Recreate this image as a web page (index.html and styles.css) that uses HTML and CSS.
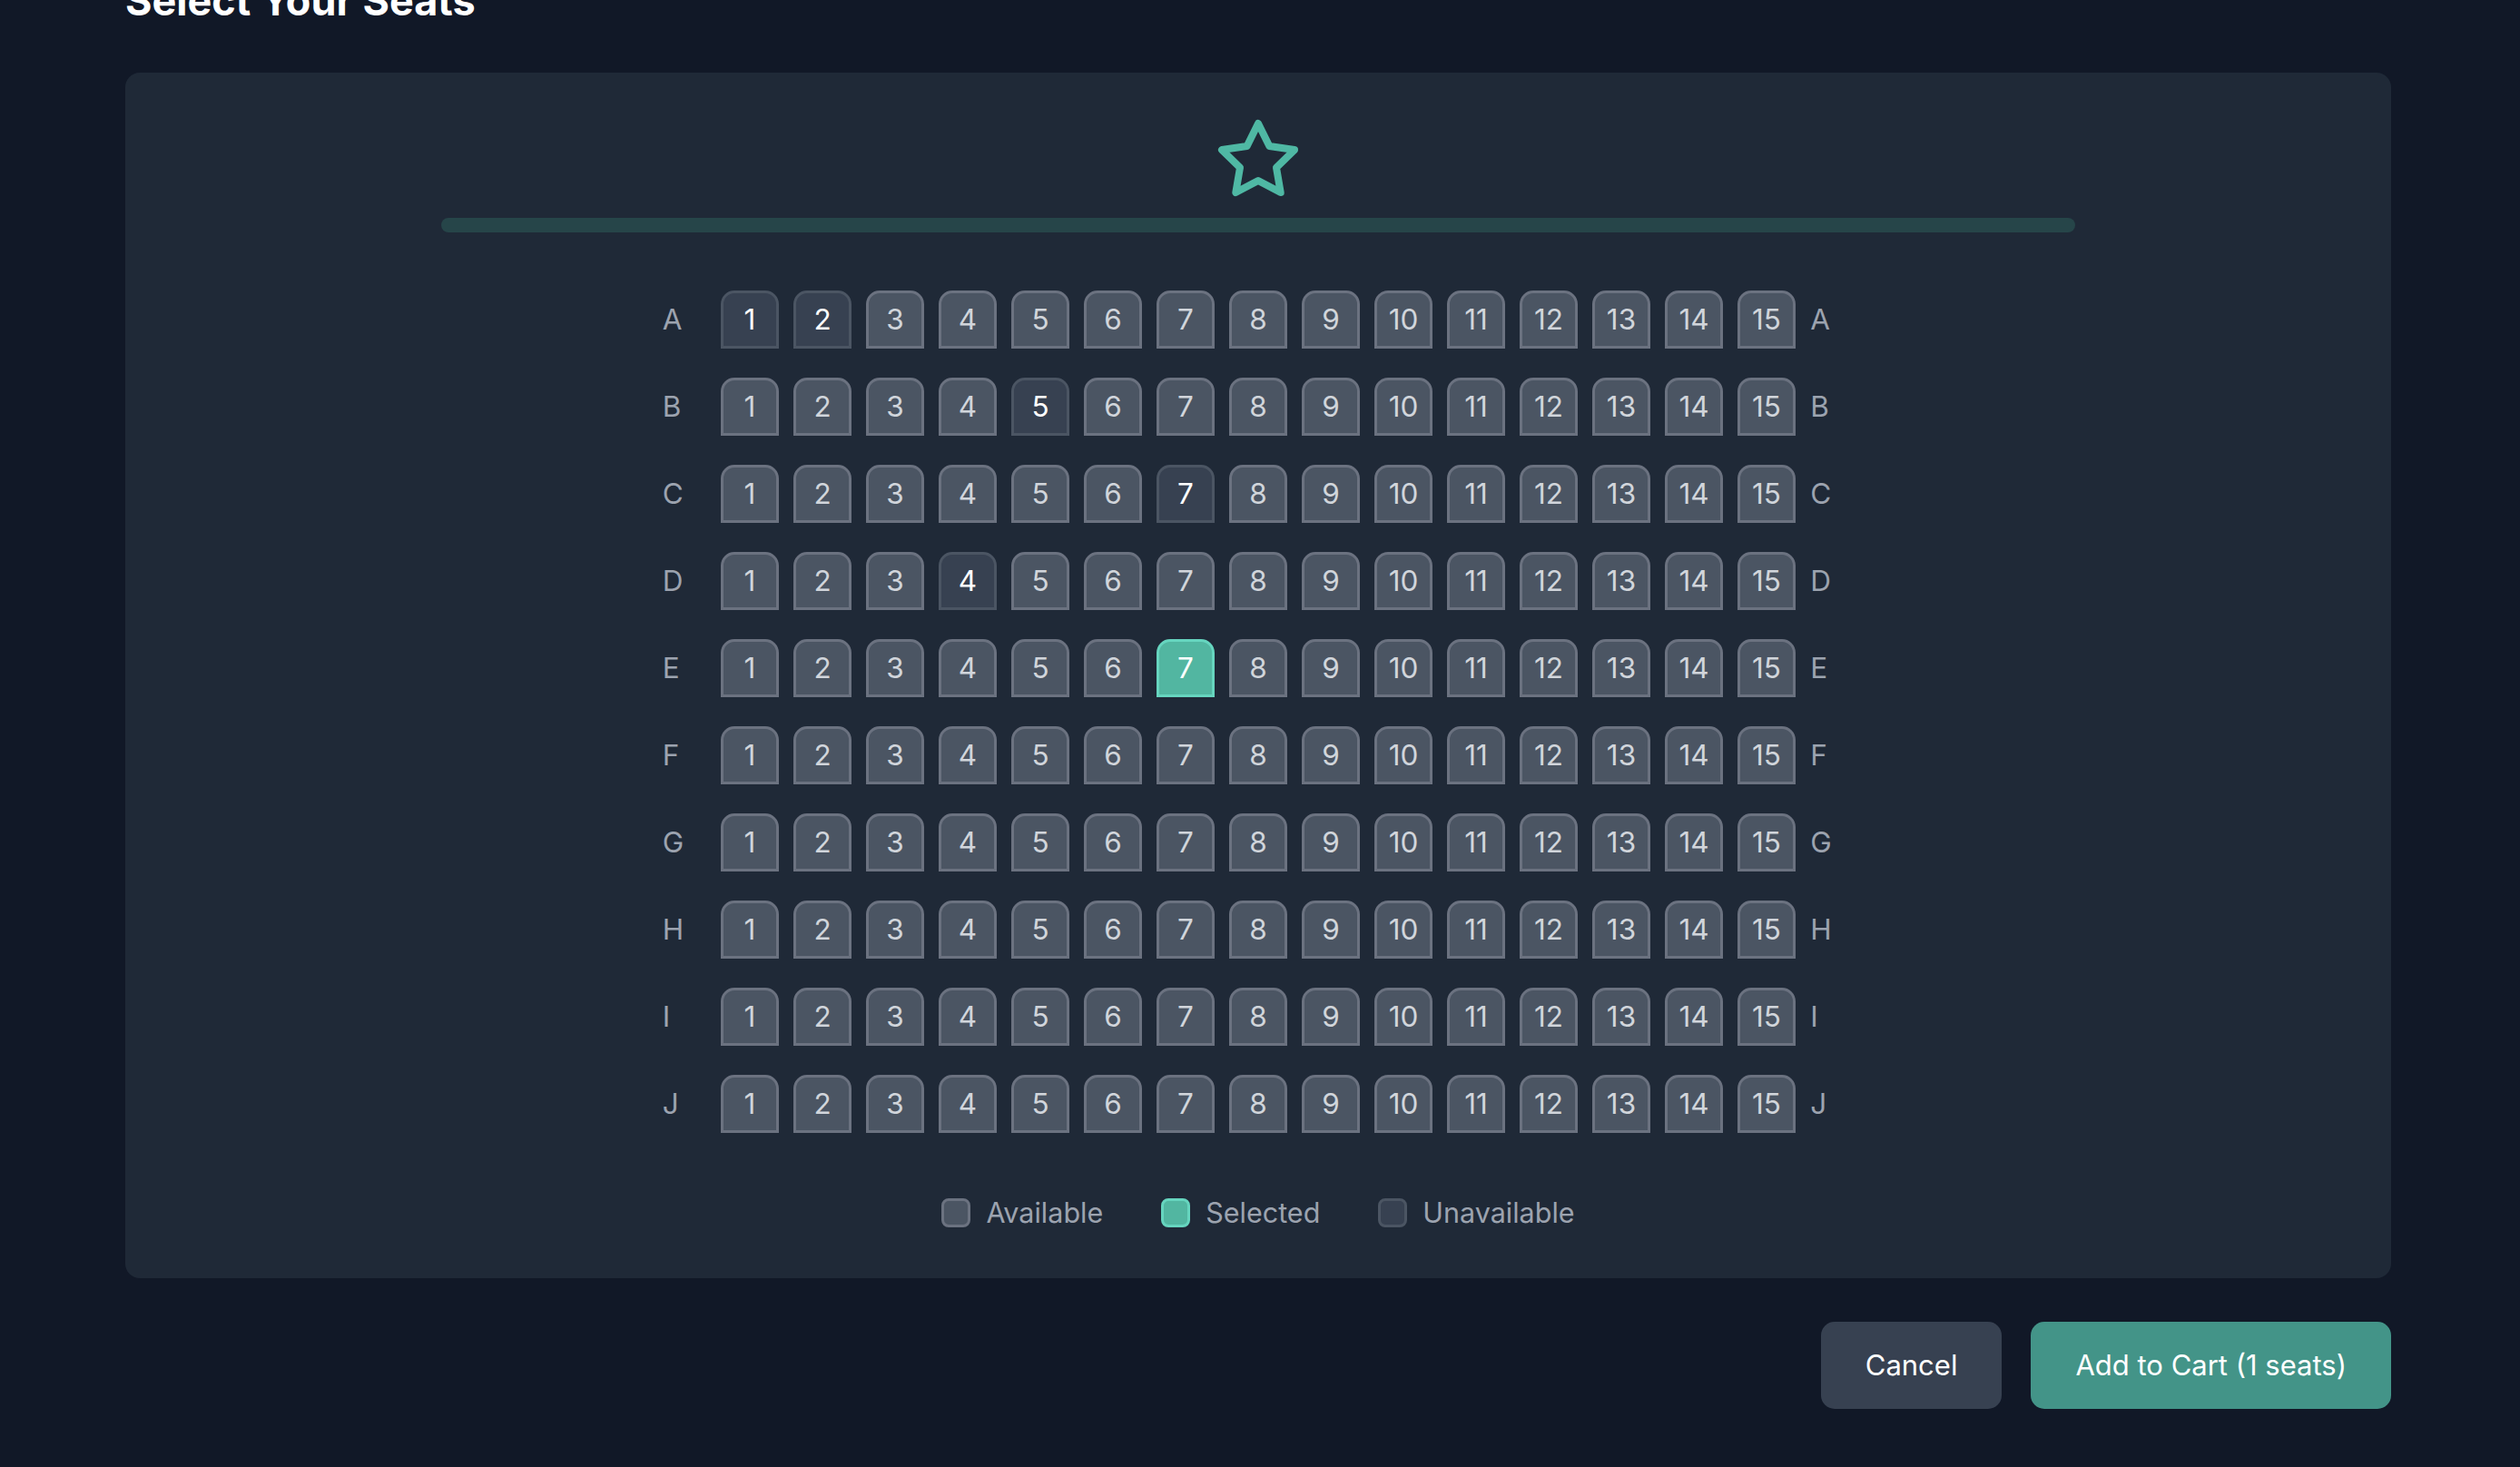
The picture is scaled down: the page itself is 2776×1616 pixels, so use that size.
FILE: index.html
```html
<!DOCTYPE html>
<html lang="en">
<head>
<meta charset="utf-8">
<title>Select Your Seats</title>
<link rel="stylesheet" href="styles.css">
</head>
<body>
<main class="page">
  <h1 class="title">Select Your Seats</h1>
  <section class="card">
    <div class="screen">
      <svg class="star" width="96" height="96" viewBox="0 0 24 24" fill="none" stroke="currentColor" stroke-width="2" stroke-linecap="round" stroke-linejoin="round"><polygon points="12 2 15.09 8.26 22 9.27 17 14.14 18.18 21.02 12 17.77 5.82 21.02 7 14.14 2 9.27 8.91 8.26 12 2"/></svg>
      <div class="screen-bar"></div>
    </div>
    <div class="rows">
      <div class="row"><span class="label">A</span><span class="seat off">1</span><span class="seat off">2</span><span class="seat">3</span><span class="seat">4</span><span class="seat">5</span><span class="seat">6</span><span class="seat">7</span><span class="seat">8</span><span class="seat">9</span><span class="seat">10</span><span class="seat">11</span><span class="seat">12</span><span class="seat">13</span><span class="seat">14</span><span class="seat">15</span><span class="label">A</span></div>
      <div class="row"><span class="label">B</span><span class="seat">1</span><span class="seat">2</span><span class="seat">3</span><span class="seat">4</span><span class="seat off">5</span><span class="seat">6</span><span class="seat">7</span><span class="seat">8</span><span class="seat">9</span><span class="seat">10</span><span class="seat">11</span><span class="seat">12</span><span class="seat">13</span><span class="seat">14</span><span class="seat">15</span><span class="label">B</span></div>
      <div class="row"><span class="label">C</span><span class="seat">1</span><span class="seat">2</span><span class="seat">3</span><span class="seat">4</span><span class="seat">5</span><span class="seat">6</span><span class="seat off">7</span><span class="seat">8</span><span class="seat">9</span><span class="seat">10</span><span class="seat">11</span><span class="seat">12</span><span class="seat">13</span><span class="seat">14</span><span class="seat">15</span><span class="label">C</span></div>
      <div class="row"><span class="label">D</span><span class="seat">1</span><span class="seat">2</span><span class="seat">3</span><span class="seat off">4</span><span class="seat">5</span><span class="seat">6</span><span class="seat">7</span><span class="seat">8</span><span class="seat">9</span><span class="seat">10</span><span class="seat">11</span><span class="seat">12</span><span class="seat">13</span><span class="seat">14</span><span class="seat">15</span><span class="label">D</span></div>
      <div class="row"><span class="label">E</span><span class="seat">1</span><span class="seat">2</span><span class="seat">3</span><span class="seat">4</span><span class="seat">5</span><span class="seat">6</span><span class="seat picked">7</span><span class="seat">8</span><span class="seat">9</span><span class="seat">10</span><span class="seat">11</span><span class="seat">12</span><span class="seat">13</span><span class="seat">14</span><span class="seat">15</span><span class="label">E</span></div>
      <div class="row"><span class="label">F</span><span class="seat">1</span><span class="seat">2</span><span class="seat">3</span><span class="seat">4</span><span class="seat">5</span><span class="seat">6</span><span class="seat">7</span><span class="seat">8</span><span class="seat">9</span><span class="seat">10</span><span class="seat">11</span><span class="seat">12</span><span class="seat">13</span><span class="seat">14</span><span class="seat">15</span><span class="label">F</span></div>
      <div class="row"><span class="label">G</span><span class="seat">1</span><span class="seat">2</span><span class="seat">3</span><span class="seat">4</span><span class="seat">5</span><span class="seat">6</span><span class="seat">7</span><span class="seat">8</span><span class="seat">9</span><span class="seat">10</span><span class="seat">11</span><span class="seat">12</span><span class="seat">13</span><span class="seat">14</span><span class="seat">15</span><span class="label">G</span></div>
      <div class="row"><span class="label">H</span><span class="seat">1</span><span class="seat">2</span><span class="seat">3</span><span class="seat">4</span><span class="seat">5</span><span class="seat">6</span><span class="seat">7</span><span class="seat">8</span><span class="seat">9</span><span class="seat">10</span><span class="seat">11</span><span class="seat">12</span><span class="seat">13</span><span class="seat">14</span><span class="seat">15</span><span class="label">H</span></div>
      <div class="row"><span class="label">I</span><span class="seat">1</span><span class="seat">2</span><span class="seat">3</span><span class="seat">4</span><span class="seat">5</span><span class="seat">6</span><span class="seat">7</span><span class="seat">8</span><span class="seat">9</span><span class="seat">10</span><span class="seat">11</span><span class="seat">12</span><span class="seat">13</span><span class="seat">14</span><span class="seat">15</span><span class="label">I</span></div>
      <div class="row"><span class="label">J</span><span class="seat">1</span><span class="seat">2</span><span class="seat">3</span><span class="seat">4</span><span class="seat">5</span><span class="seat">6</span><span class="seat">7</span><span class="seat">8</span><span class="seat">9</span><span class="seat">10</span><span class="seat">11</span><span class="seat">12</span><span class="seat">13</span><span class="seat">14</span><span class="seat">15</span><span class="label">J</span></div>
    </div>
    <div class="legend">
      <div class="legend-item"><span class="swatch"></span><span>Available</span></div>
      <div class="legend-item"><span class="swatch picked"></span><span>Selected</span></div>
      <div class="legend-item"><span class="swatch off"></span><span>Unavailable</span></div>
    </div>
  </section>
  <div class="actions">
    <button class="btn btn-cancel" type="button">Cancel</button>
    <button class="btn btn-primary" type="button">Add to Cart (1 seats)</button>
  </div>
</main>
</body>
</html>
```

FILE: styles.css
```css
* { box-sizing: border-box; }

html, body {
  margin: 0;
  padding: 0;
  background: #111827;
  height: 100%;
  overflow: hidden;
}

body {
  font-family: Inter, "Noto Sans", "Liberation Sans", sans-serif;
  color: #e5e7eb;
}

.page {
  width: 2496px;
  margin: 0 0 0 138px;
}

.title {
  margin: -27px 0 51px 0;
  font-size: 45px;
  line-height: 56px;
  font-weight: 700;
  color: #ffffff;
}

.card {
  background: #1f2937;
  border-radius: 16px;
  padding: 48px;
  display: flex;
  flex-direction: column;
  align-items: center;
}

.screen {
  display: flex;
  flex-direction: column;
  align-items: center;
  gap: 16px;
  width: 100%;
}

.star {
  display: block;
  color: #4fb8a4;
}

.screen-bar {
  width: 1800px;
  height: 16px;
  border-radius: 8px;
  background: #264549;
}

.rows {
  margin-top: 64px;
  display: flex;
  flex-direction: column;
  gap: 32.5px;
}

.row {
  display: flex;
  align-items: center;
  gap: 16.5px;
}

.label {
  width: 48px;
  font-size: 31.5px;
  line-height: 48px;
  color: #9ca3af;
}

.seat {
  width: 63.5px;
  height: 63.5px;
  display: flex;
  align-items: center;
  justify-content: center;
  font-size: 31.5px;
  line-height: 1;
  color: #d1d5db;
  background: #4b5563;
  border: 3.5px solid #6b7280;
  border-radius: 15px 15px 0 0;
}

.seat.off {
  background: #374151;
  border-color: #4b5563;
  color: #ffffff;
}

.seat.picked {
  background: #52b6a1;
  border-color: #66d5bf;
  color: #ffffff;
}

.legend {
  margin-top: 64px;
  display: flex;
  align-items: center;
  gap: 64px;
}

.legend-item {
  display: flex;
  align-items: center;
  gap: 17px;
  font-size: 30.5px;
  line-height: 48px;
  color: #9ca3af;
}

.swatch {
  width: 32px;
  height: 32px;
  border-radius: 8px;
  background: #4b5563;
  border: 3.5px solid #6b7280;
}

.swatch.picked {
  background: #52b6a1;
  border-color: #66d5bf;
}

.swatch.off {
  background: #374151;
  border-color: #4b5563;
}

.actions {
  margin-top: 48px;
  display: flex;
  justify-content: flex-end;
  gap: 32px;
}

.btn {
  height: 96px;
  padding: 0 49px;
  border: none;
  border-radius: 15px;
  font-family: Inter, "Noto Sans", "Liberation Sans", sans-serif;
  font-size: 31px;
  font-weight: 400;
  color: #ffffff;
  cursor: pointer;
}

.btn-cancel {
  background: #374151;
}

.btn-primary {
  background: #439488;
}
```
